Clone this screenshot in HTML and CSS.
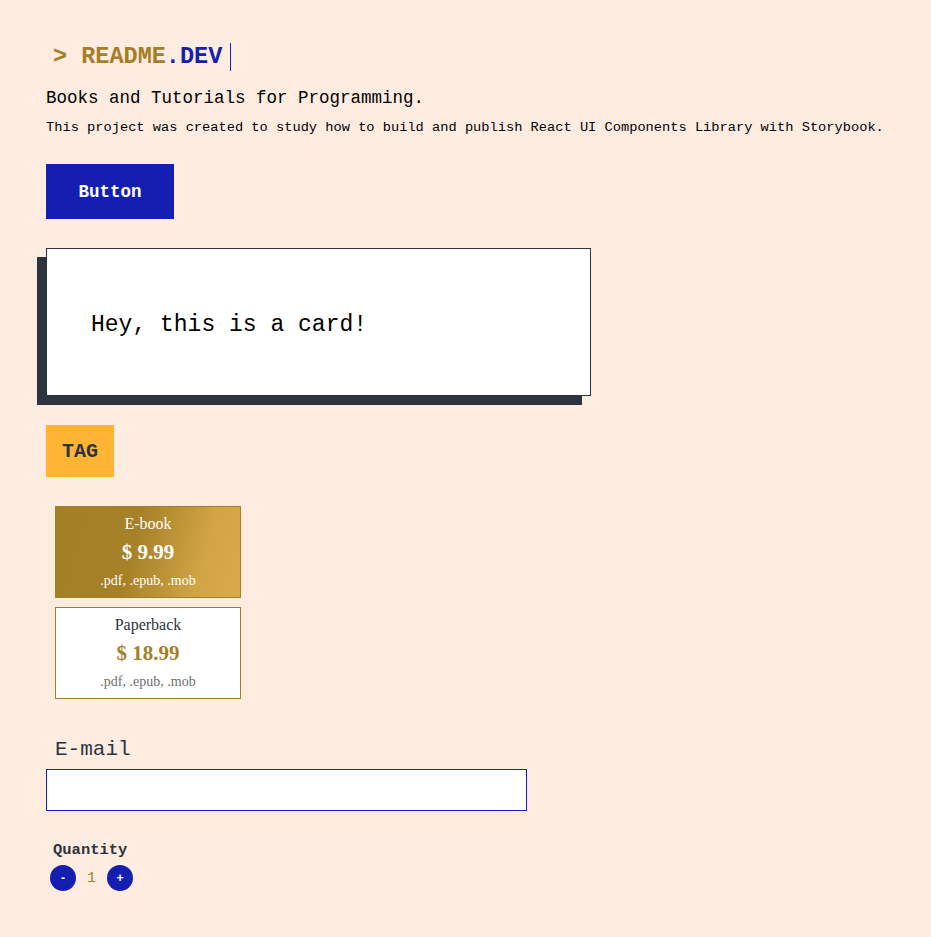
FILE: index.html
```html
<!DOCTYPE html>
<html lang="en">
<head>
<meta charset="utf-8">
<title>README.DEV</title>
<link rel="stylesheet" href="styles.css">
</head>
<body>
<main class="page">
  <header class="brand">
    <h1 class="logo"><span class="prompt">&gt;</span> <span class="gold">README</span><span class="blue">.DEV</span><span class="cursor"></span></h1>
    <p class="headline">Books and Tutorials for Programming.</p>
    <p class="desc">This project was created to study how to build and publish React UI Components Library with Storybook.</p>
  </header>

  <button class="btn">Button</button>

  <div class="card">Hey, this is a card!</div>

  <span class="tag">TAG</span>

  <div class="prices">
    <div class="price active">
      <div class="ptype">E-book</div>
      <div class="pval">$ 9.99</div>
      <div class="pfmt">.pdf, .epub, .mob</div>
    </div>
    <div class="price">
      <div class="ptype">Paperback</div>
      <div class="pval">$ 18.99</div>
      <div class="pfmt">.pdf, .epub, .mob</div>
    </div>
  </div>

  <label class="field">
    <span class="field-label">E-mail</span>
    <input class="input" type="email">
  </label>

  <div class="qty">
    <div class="qty-label">Quantity</div>
    <div class="qty-row">
      <button class="round">-</button>
      <span class="qty-val">1</span>
      <button class="round">+</button>
    </div>
  </div>
</main>
</body>
</html>
```
FILE: styles.css
```css
* { box-sizing: border-box; }
html, body { margin: 0; padding: 0; }
body {
  background: #ffece1;
  font-family: "Liberation Mono", "Courier New", monospace;
  color: #000;
}
.page {
  padding: 40px 0 40px 46px;
  display: flex;
  flex-direction: column;
  align-items: flex-start;
}
.brand { display: flex; flex-direction: column; }
.logo {
  margin: 3px 0 0 7px;
  font-size: 23.5px;
  font-weight: bold;
  line-height: 28px;
  white-space: pre;
}
.prompt, .gold { color: #a57f26; }
.blue { color: #1420b0; }
.cursor {
  display: inline-block;
  width: 1px;
  height: 28px;
  background: #1420c8;
  margin-left: 8px;
  vertical-align: middle;
}
.headline {
  margin: 15px 0 0;
  font-size: 17.5px;
  line-height: 24px;
}
.desc {
  margin: 9px 0 0;
  font-size: 13.7px;
  line-height: 18px;
}
.btn {
  margin-top: 27px;
  width: 128px;
  height: 55px;
  background: #141fb2;
  color: #fff;
  border: 0;
  font-family: inherit;
  font-size: 17.5px;
  font-weight: bold;
  cursor: pointer;
}
.card {
  margin-top: 29px;
  width: 545px;
  height: 148px;
  background: #fff;
  border: 1px solid #2d3440;
  box-shadow: -9px 9px 0 #2d3440;
  font-size: 23px;
  padding: 6px 0 0 44px;
  display: flex;
  align-items: center;
}
.tag {
  margin-top: 29px;
  width: 68px;
  height: 52px;
  background: #ffb533;
  color: #2d3440;
  font-weight: bold;
  font-size: 20px;
  display: flex;
  align-items: center;
  justify-content: center;
}
.prices {
  margin: 29px 0 0 9px;
  display: flex;
  flex-direction: column;
  gap: 9px;
}
.price {
  width: 186px;
  height: 92px;
  border: 1px solid #a57f26;
  background: #fff;
  font-family: "Liberation Serif", "Times New Roman", serif;
  text-align: center;
  color: #2d3440;
  display: flex;
  flex-direction: column;
  align-items: center;
  padding-top: 7px;
}
.price.active {
  background: linear-gradient(105deg, #a37f26 0%, #a68127 42%, #d2a446 78%, #d9aa4c 100%);
  color: #fff;
}
.ptype { font-size: 16px; line-height: 20px; }
.pval {
  font-size: 21px;
  font-weight: bold;
  line-height: 24px;
  margin-top: 6px;
  color: #a57f26;
}
.pfmt {
  font-size: 14px;
  line-height: 18px;
  margin-top: 8px;
  color: #6f6f6f;
}
.price.active .pval, .price.active .pfmt { color: #fff; }
.field {
  margin-top: 39px;
  display: flex;
  flex-direction: column;
}
.field-label {
  margin-left: 9px;
  font-size: 21px;
  line-height: 24px;
  color: #2d3440;
}
.input {
  margin-top: 7px;
  width: 481px;
  height: 42px;
  border: 1px solid #1420d0;
  background: #fff;
  outline: none;
}
.qty { margin: 30px 0 0 4px; }
.qty-label {
  margin-left: 3px;
  font-size: 15.5px;
  font-weight: bold;
  color: #2d3440;
  line-height: 18px;
}
.qty-row {
  margin-top: 6px;
  display: flex;
  align-items: center;
  gap: 11px;
}
.round {
  width: 26px;
  height: 26px;
  border-radius: 50%;
  border: 0;
  background: #141fb2;
  color: #fff;
  font-family: "Liberation Sans", Arial, sans-serif;
  font-weight: bold;
  font-size: 12px;
  padding: 0;
  display: flex;
  align-items: center;
  justify-content: center;
}
.qty-val {
  font-size: 15px;
  color: #a57f26;
}
```
